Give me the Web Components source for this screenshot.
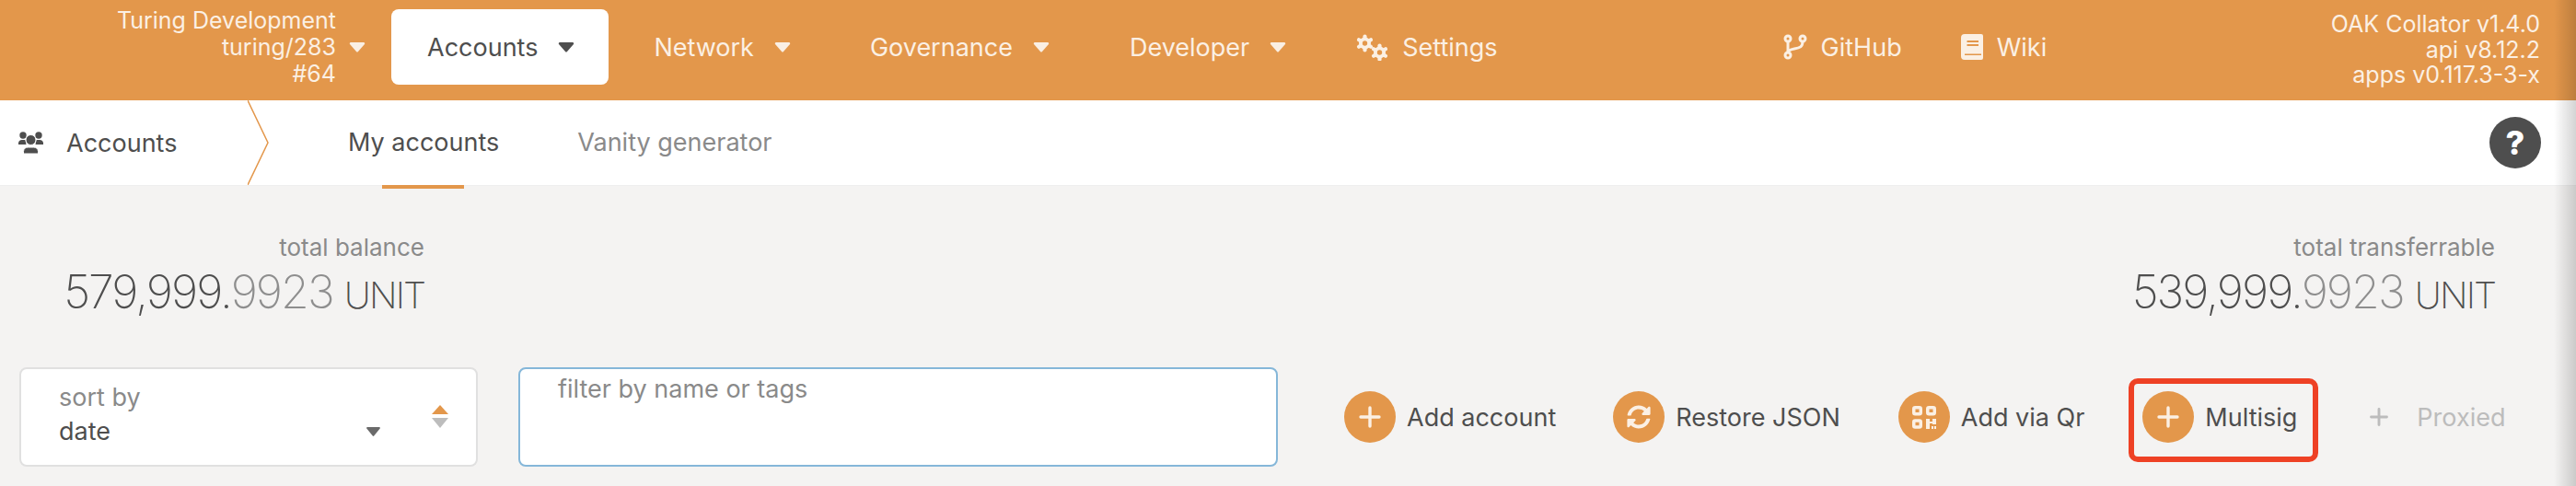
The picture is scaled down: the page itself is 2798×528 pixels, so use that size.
<!DOCTYPE html>
<html>
<head>
<meta charset="utf-8">
<title>Accounts</title>
<style>
html, body {margin: 0; padding: 0; background: #f4f3f2;}
body {width: 2798px; height: 528px; overflow: hidden; position: relative; font-family: Inter, 'Liberation Sans', sans-serif; color: #4e4e4e;}
#edge {position: absolute; top: 0; right: 0; bottom: 0; width: 24px; background: linear-gradient(to right, rgba(0,0,0,0), rgba(0,0,0,.17));}
</style>
</head>
<body>
<app-header></app-header>
<sub-nav></sub-nav>
<balance-row></balance-row>
<tool-row></tool-row>
<div id="edge"></div>

<script>
const caret = (color) => `<svg width="18" height="12" viewBox="0 0 18 12"><path d="M2 1h14a1.2 1.2 0 0 1 1 1.9l-7 8a1.3 1.3 0 0 1-2 0l-7-8A1.2 1.2 0 0 1 2 1z" fill="${color}"/></svg>`;

// six toothed cog, hole filled with the bar colour
const gear = (cx, cy) => `
    <g stroke="currentColor" stroke-width="4.200" stroke-linecap="round">
        <path d="M${cx} ${cy - 7.500}V${cy + 7.500}"/>
        <path d="M${cx - 6.500} ${cy - 3.750}L${cx + 6.500} ${cy + 3.750}"/>
        <path d="M${cx - 6.500} ${cy + 3.750}L${cx + 6.500} ${cy - 3.750}"/>
    </g>
    <circle cx="${cx}" cy="${cy}" r="6.500" fill="currentColor"/>
    <circle cx="${cx}" cy="${cy}" r="2.700" fill="#e3974b"/>`;

const ICONS = {
    plus: `<svg width="26" height="26" viewBox="0 0 26 26"><path d="M13 3v20M3 13h20" stroke="currentColor" stroke-width="3.4" stroke-linecap="round"/></svg>`,
    sync: `<svg width="26" height="26" viewBox="0 0 512 512"><path fill="currentColor" d="M370.72 133.28C339.458 104.008 298.888 87.962 255.848 88c-77.458.068-144.328 53.178-162.791 126.85-1.344 5.363-6.122 9.15-11.651 9.15H24.103c-7.498 0-13.194-6.807-11.807-14.176C33.933 94.924 134.813 8 256 8c66.448 0 126.791 26.136 171.315 68.685L463.03 40.97C478.149 25.851 504 36.559 504 57.941V192c0 13.255-10.745 24-24 24H345.941c-21.382 0-32.09-25.851-16.971-40.971l41.75-41.749zM32 296h134.059c21.382 0 32.09 25.851 16.971 40.971l-41.75 41.75c31.262 29.273 71.835 45.319 114.876 45.28 77.418-.07 144.315-53.144 162.787-126.849 1.344-5.363 6.122-9.15 11.651-9.15h57.304c7.498 0 13.194 6.807 11.807 14.176C478.067 417.076 377.187 504 256 504c-66.448 0-126.791-26.136-171.315-68.685L48.97 471.03C33.851 486.149 8 475.441 8 454.059V320c0-13.255 10.745-24 24-24z"/></svg>`,
    qr: `<svg width="26" height="25" viewBox="0 0 26 25" fill="none" stroke="currentColor" stroke-width="3.500"><rect x="1.750" y="1.750" width="7.500" height="7" rx="1.500"/><rect x="16.750" y="1.750" width="7.500" height="7" rx="1.500"/><rect x="1.750" y="16" width="7.500" height="7" rx="1.500"/><path fill="currentColor" stroke="none" d="M15 14h4v3h3v-3h4v6h-4v-1h-3v6h-4zM21 22h2v3h-2zM24 22h2v3h-2z"/></svg>`,
    users: `<svg width="28" height="24" viewBox="0 0 28 24" fill="currentColor"><circle cx="5" cy="4" r="3.700"/><circle cx="22" cy="4" r="3.700"/><path d="M0 14v-2a4 4 0 0 1 4-3h3.500l1 5zM27 14v-2a4 4 0 0 0-4-3h-3.500l-1 5z"/><circle cx="13.500" cy="9" r="5.500" stroke="#fff" stroke-width="1"/><path d="M5.500 24v-2.500a5 5 0 0 1 5-4.500h6a5 5 0 0 1 5 4.500V24z" stroke="#fff" stroke-width="1"/></svg>`,
    cogs: `<svg width="35" height="29" viewBox="0 0 35 29">${gear(9.500, 10)}${gear(25.500, 20)}</svg>`,
    branch: `<svg width="26" height="28" viewBox="0 0 26 28" fill="none" stroke="currentColor" stroke-width="3"><circle cx="5" cy="5" r="3"/><circle cx="5" cy="23" r="3"/><circle cx="21" cy="5" r="3"/><path d="M5 8v12M21 8c0 6-3 7-9 8-4 .7-7 1.500-7 4"/></svg>`,
    book: `<svg width="24" height="28" viewBox="0 0 24 28"><path fill="currentColor" fill-rule="evenodd" d="M4 0h18a2 2 0 0 1 2 2v24a2 2 0 0 1-2 2H4a4 4 0 0 1-4-4V4a4 4 0 0 1 4-4zM6.500 7v2h12.500V7zM6.500 11v2h12.500v-2zM4 21.500V23h18v-1.500z"/></svg>`
};

// top orange bar items
class NavItem extends HTMLElement {
    constructor() {
        super();
        this._root = this.attachShadow({mode: 'open'});
    }

    connectedCallback() {
        const active = this.hasAttribute('active');
        const icon = this.getAttribute('icon');
        const hasMenu = this.hasAttribute('menu');
        this._root.innerHTML =
`<style>
:host {display: flex; align-items: center; height: 82px; box-sizing: border-box; padding: 0 37px 0 39px; gap: 22px; border-radius: 8px; color: inherit;}
:host([active]) {background: #fff; color: #4e4e4e;}
:host([plain]) {padding: 0; gap: 15px;}
svg {display: block;}
span {white-space: nowrap;}
</style>
${icon ? ICONS[icon] : ''}<span><slot></slot></span>${hasMenu ? caret(active ? '#4e4e4e' : '#faefe4') : ''}`;
    }
}
customElements.define('nav-item', NavItem);

class AppHeader extends HTMLElement {
    constructor() {
        super();
        this._root = this.attachShadow({mode: 'open'});
        this._root.innerHTML =
`<style>
:host {display: flex; align-items: center; height: 109px; background: #e3974b; color: #fbf0e4; font-size: 27px; box-sizing: border-box; padding: 0 39px 7px 0;}
.chain {display: flex; align-items: center; width: 397px; justify-content: flex-end; gap: 14px; margin-right: 28px; font-size: 25px;}
.lines {text-align: right; line-height: 29px; white-space: nowrap;}
.menu {display: flex; align-items: center; gap: 10px;}
.info {margin-left: auto; margin-top: 7px; text-align: right; line-height: 27.500px; font-size: 25px; white-space: nowrap;}
</style>
<div class="chain">
    <div class="lines">Turing Development<br>turing/283<br>#64</div>
    ${caret('#faefe4')}
</div>
<div class="menu">
    <nav-item active menu>Accounts</nav-item>
    <nav-item menu>Network</nav-item>
    <nav-item menu>Governance</nav-item>
    <nav-item menu style="margin-left:1px">Developer</nav-item>
</div>
<nav-item plain icon="cogs" style="margin-left:39px">Settings</nav-item>
<nav-item plain icon="branch" style="margin-left:310px">GitHub</nav-item>
<nav-item plain icon="book" style="margin-left:64px">Wiki</nav-item>
<div class="info">OAK Collator v1.4.0<br>api v8.12.2<br>apps v0.117.3-3-x</div>`;
    }
}
customElements.define('app-header', AppHeader);

class SubNav extends HTMLElement {
    constructor() {
        super();
        this._root = this.attachShadow({mode: 'open'});
        this._root.innerHTML =
`<style>
:host {display: flex; align-items: center; height: 92px; background: #fff; font-size: 27px; color: #4e4e4e; position: relative; padding-left: 20px; box-sizing: border-box; box-shadow: 0 1px 0 #eee;}
.logo {display: flex; align-items: center; gap: 24px; width: 249px;}
.logo svg {display: block;}
.chevron {display: block; width: 24px; height: 92px; flex: none;}
.tab {position: relative; line-height: 92px; white-space: nowrap;}
.tab.on {margin-left: 85px;}
.tab.off {margin-left: 85px; color: #8a8a8a;}
.tab.on::after {content: ''; position: absolute; left: 37px; right: 38px; bottom: -4px; height: 4px; background: #e3974b;}
.help {margin-left: auto; margin-right: 38px; width: 56px; height: 56px; border-radius: 50%; background: #4e4e4e; color: #fff; display: flex; align-items: center; justify-content: center; font-size: 36px; font-weight: 800;}
</style>
<div class="logo">${ICONS.users}<span>Accounts</span></div>
<svg class="chevron" viewBox="0 0 24 92"><path d="M0 0L22 46L0 92" fill="none" stroke="#e3974b" stroke-width="1.500"/></svg>
<div class="tab on" id="mine">My accounts</div>
<div class="tab off">Vanity generator</div>
<div class="help">?</div>`;
    }
}
customElements.define('sub-nav', SubNav);

// "total balance" style label and figure
class BalanceStat extends HTMLElement {
    constructor() {
        super();
        this._root = this.attachShadow({mode: 'open'});
    }

    connectedCallback() {
        const value = this.getAttribute('value').split('.');
        this._root.innerHTML =
`<style>
:host {display: block; text-align: right; white-space: nowrap;}
.label {font-size: 26px; line-height: 30px; color: #8a8a8a;}
.value {font-size: 50px; font-weight: 200; line-height: 56px; color: #4e4e4e; margin-top: 5px; letter-spacing: -1.950px;}
.dec {color: #8e8e8e;}
.unit {font-size: 40px; letter-spacing: -1.950px;}
</style>
<div class="label">${this.getAttribute('label')}</div>
<div class="value">${value[0]}.<span class="dec">${value[1]}</span> <span class="unit">UNIT</span></div>`;
    }
}
customElements.define('balance-stat', BalanceStat);

class BalanceRow extends HTMLElement {
    constructor() {
        super();
        this._root = this.attachShadow({mode: 'open'});
        this._root.innerHTML =
`<style>
:host {display: flex; justify-content: space-between; padding: 53px 88px 0 0; box-sizing: border-box; height: 198px; width: 2798px;}
balance-stat {width: 461px;}
</style>
<balance-stat label="total balance" value="579,999.9923"></balance-stat>
<balance-stat label="total transferrable" value="539,999.9923" style="width:auto"></balance-stat>`;
    }
}
customElements.define('balance-row', BalanceRow);

class SortBox extends HTMLElement {
    constructor() {
        super();
        this._root = this.attachShadow({mode: 'open'});
        this._root.innerHTML =
`<style>
:host {display: flex; align-items: center; width: 498px; height: 108px; box-sizing: border-box; background: #fff; border: 2px solid #e0e0e0; border-radius: 8px; padding-left: 41px; flex: none;}
.field {width: 349px; display: block; margin-top: -3px;}
.label {font-size: 27px; line-height: 30px; color: #8a8a8a;}
.row {display: flex; align-items: center; justify-content: space-between; font-size: 27px; line-height: 36px; margin-top: 4px;}
svg {display: block;}
.order {margin-left: 56px; margin-top: -2px;}
</style>
<div class="field">
    <div class="label">sort by</div>
    <div class="row"><span>date</span><svg width="15" height="10" viewBox="0 0 15 10"><path d="M1 0h13a1 1 0 0 1 .7 1.600l-6.500 8a1 1 0 0 1-1.400 0l-6.500-8A1 1 0 0 1 1 0z" fill="#6a6a6a"/></svg></div>
</div>
<svg class="order" width="18" height="25" viewBox="0 0 18 25"><path d="M9 0L18 10H0z" fill="#e3974b"/><path d="M0 14H18L9 25z" fill="#bdbdbd"/></svg>`;
    }
}
customElements.define('sort-box', SortBox);

class FilterBox extends HTMLElement {
    constructor() {
        super();
        this._root = this.attachShadow({mode: 'open'});
        this._root.innerHTML =
`<style>
:host {display: block; width: 825px; height: 108px; box-sizing: border-box; background: #fff; border: 2px solid #85b7d9; border-radius: 8px; padding: 8px 0 0 41px; flex: none; font-size: 27px; line-height: 28px; color: #8a8a8a; white-space: nowrap;}
</style>
<slot></slot>`;
    }
}
customElements.define('filter-box', FilterBox);

class ActionButton extends HTMLElement {
    constructor() {
        super();
        this._root = this.attachShadow({mode: 'open'});
    }

    connectedCallback() {
        this._root.innerHTML =
`<style>
:host {display: flex; align-items: center; gap: 12px; font-size: 27px; color: #4e4e4e; white-space: nowrap; flex: none;}
.circle {width: 56px; height: 56px; border-radius: 50%; background: #e3974b; color: #fbf0e4; display: flex; align-items: center; justify-content: center;}
svg {display: block;}
:host([disabled]) {color: #bcbcbc; gap: 30px;}
:host([disabled]) .circle {background: none; color: #bcbcbc; width: 22px;}
</style>
<div class="circle">${ICONS[this.getAttribute('icon')]}</div><span><slot></slot></span>`;
    }
}
customElements.define('action-button', ActionButton);

class ToolRow extends HTMLElement {
    constructor() {
        super();
        this._root = this.attachShadow({mode: 'open'});
        this._root.innerHTML =
`<style>
:host {display: flex; align-items: center; height: 108px; padding-left: 21px; box-sizing: border-box;}
filter-box {margin-left: 44px;}
.actions {display: flex; align-items: center; margin-left: 72px;}
.hilite {position: relative;}
.hilite::before {content: ''; position: absolute; left: -15px; right: -23px; top: -14px; bottom: -21px; border: 6px solid #ee4125; border-radius: 10px; box-sizing: border-box;}
</style>
<sort-box></sort-box>
<filter-box>filter by name or tags</filter-box>
<div class="actions">
    <action-button icon="plus">Add account</action-button>
    <action-button icon="sync" style="margin-left:62px">Restore JSON</action-button>
    <action-button icon="qr" style="margin-left:63px">Add via Qr</action-button>
    <action-button icon="plus" class="hilite" style="margin-left:63px">Multisig</action-button>
    <action-button icon="plus" disabled style="margin-left:78px">Proxied</action-button>
</div>`;
    }
}
customElements.define('tool-row', ToolRow);
</script>
</body>
</html>
